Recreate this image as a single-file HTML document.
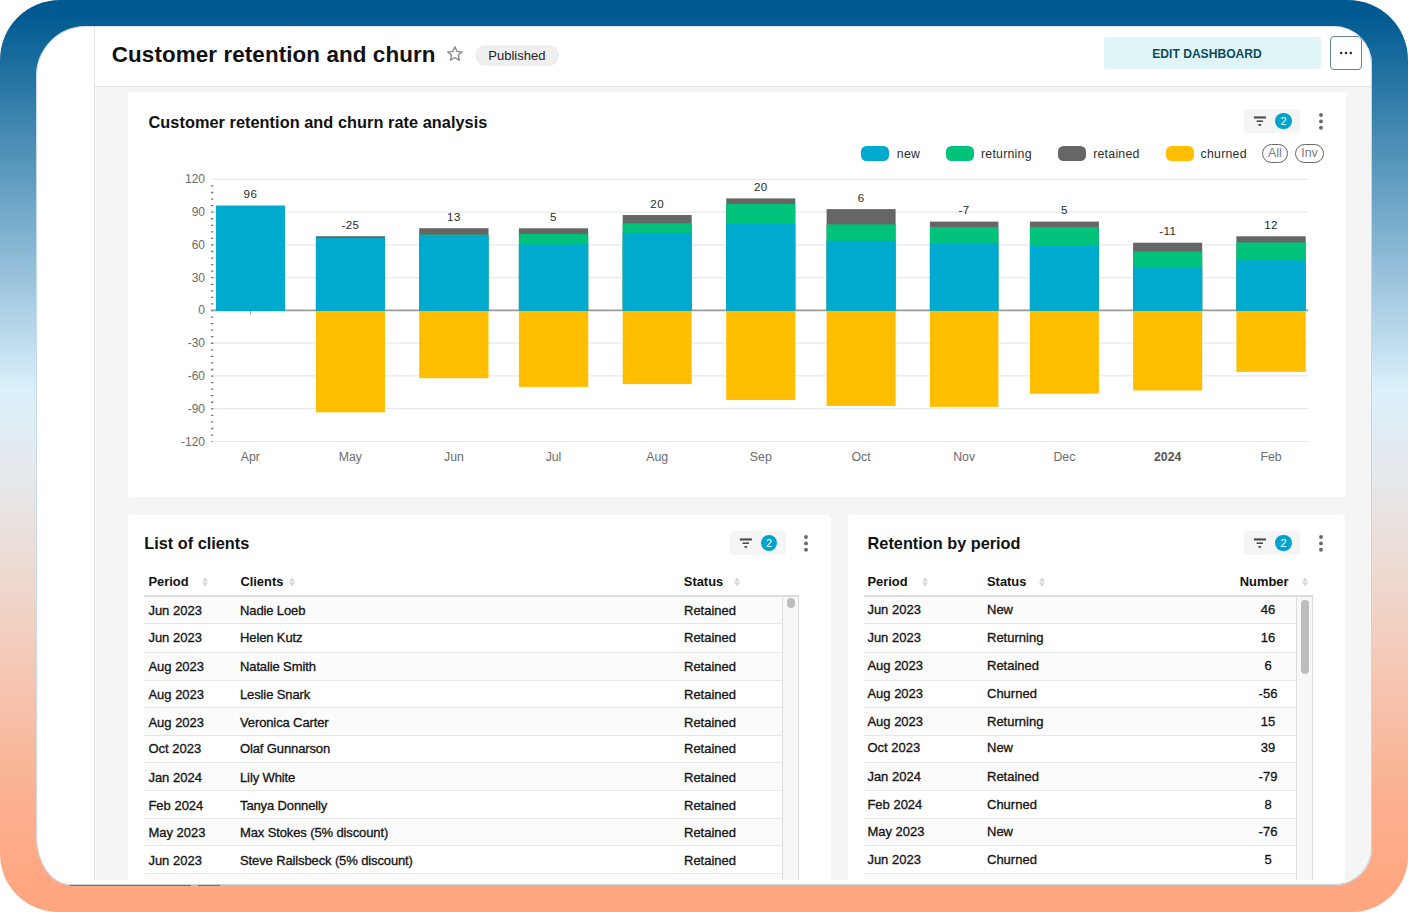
<!DOCTYPE html>
<html lang="en">
<head>
<meta charset="utf-8">
<title>Customer retention and churn</title>
<style>
*{box-sizing:border-box;margin:0;padding:0}
html,body{width:1408px;height:912px;overflow:hidden;background:#fff;font-family:"Liberation Sans",Arial,sans-serif;color:#111}
.abs{position:absolute}
.frame{position:absolute;left:0;top:0;width:1408px;height:912px;border-radius:60px 60px 56px 58px;
background:linear-gradient(180deg,#005a91 0px,#005a91 15px,#dbf0fc 390px,#e6e8ea 480px,#efd8cf 580px,#f6c2ab 700px,#fcb08f 800px,#ffa781 880px,#ffa680 912px)}
.panel{position:absolute;left:36px;top:26px;width:1336px;height:859px;background:#fff;border-radius:50px 38px 37px 34px/50px 38px 37px 49px;overflow:hidden}
.pborder{position:absolute;left:36px;top:26px;width:1336px;height:859px;border-radius:50px 38px 37px 34px/50px 38px 37px 49px;border:1px solid rgba(150,185,215,0.55);border-top-color:rgba(190,205,225,0.6);pointer-events:none}
.inner{position:absolute;left:-36px;top:-26px;width:1408px;height:912px}
.greybg{position:absolute;left:94px;top:86px;width:1280px;height:794px;background:#f5f5f5;border-left:1px solid #e4e4e4;border-top:1px solid #e6e6e6}
.vline{position:absolute;left:94px;top:26px;width:1px;height:854px;background:#e6e6e6}
.card{position:absolute;background:#fff;border-radius:4px}
h1{position:absolute;left:111.8px;top:40.5px;font-size:22.4px;line-height:28px;font-weight:700;letter-spacing:0.1px;white-space:nowrap;color:#101010}
.pub{position:absolute;left:476.2px;top:45.8px;width:81.4px;height:19.6px;border-radius:10px;background:#efefef;box-shadow:0 0 0 0.6px #e4e4e4;font-size:13px;line-height:19.8px;text-align:center;color:#222}
.editbtn{position:absolute;left:1104px;top:37px;width:216.5px;height:32px;border-radius:3px;background:#dff5f7;font-size:12.1px;font-weight:700;line-height:35.2px;text-align:center;padding-right:10.5px;color:#0d4a5a;letter-spacing:0px}
.morebtn{position:absolute;left:1330px;top:36px;width:32px;height:33.5px;border-radius:4px;border:1.2px solid #5f8790;background:#fff}
.h2{position:absolute;font-size:16.3px;font-weight:700;line-height:20px;white-space:nowrap;color:#111}
.th{position:absolute;font-size:12.9px;font-weight:700;line-height:16px;white-space:nowrap;color:#111}
.row{position:absolute;border-bottom:1px solid #e8e8e8;font-size:13px;color:#151515}
.row .c{position:absolute;line-height:16px;white-space:nowrap;-webkit-text-stroke:0.32px #151515}
.hline{position:absolute;height:2px;background:#dcdcdc}
.fbox{position:absolute;width:55.5px;height:23.5px;border-radius:4px;background:#f5f5f5}
.badge{position:absolute;width:16.4px;height:16.4px;border-radius:50%;background:#00a3cc;color:#fff;font-size:10.8px;line-height:16.6px;text-align:center}
.chartsvg{position:absolute;left:0;top:0}
.chartsvg text{font-family:"Liberation Sans",Arial,sans-serif}
.ax{font-size:12px;fill:#6b6b6b}
.xl{font-size:12.3px;fill:#6b6b6b}
.xl.b{font-weight:700;fill:#555}
.val{font-size:11.6px;fill:#2a2a2a;letter-spacing:0.4px}
.lg{position:absolute;top:145.5px;width:28.2px;height:15.4px;border-radius:5.5px}
.lt{position:absolute;top:146.5px;font-size:12.3px;line-height:15px;color:#2b2b2b;white-space:nowrap;letter-spacing:0.25px}
.pill{position:absolute;top:143.5px;height:19px;border:1.2px solid #666;border-radius:10px;font-size:12.4px;line-height:16.6px;text-align:center;color:#7c7c7c}
.track{position:absolute;background:#f8f8f8;border-left:1px solid #dcdcdc;border-right:1px solid #dcdcdc}
.thumb{position:absolute;background:#bdbdbd;border-radius:5px}
</style>
</head>
<body>
<div class="frame"></div>
<div class="panel"><div class="inner">
<div class="vline"></div>
<div class="greybg"></div>

<h1>Customer retention and churn</h1>
<svg class="abs" style="left:446.3px;top:45.2px" width="17.8" height="17.8" viewBox="0 0 18 18"><path d="M9 1.8 L11.1 6.5 L16.2 7 L12.4 10.4 L13.5 15.4 L9 12.8 L4.5 15.4 L5.6 10.4 L1.8 7 L6.9 6.5 Z" fill="none" stroke="#909090" stroke-width="1.5" stroke-linejoin="round"/></svg>
<div class="pub">Published</div>
<div class="editbtn">EDIT DASHBOARD</div>
<div class="morebtn"></div>
<svg class="abs" style="left:1338px;top:50px" width="16" height="6" viewBox="0 0 16 6"><circle cx="3.2" cy="3" r="1.25" fill="#2a2a2a"/><circle cx="8" cy="3" r="1.25" fill="#2a2a2a"/><circle cx="12.8" cy="3" r="1.25" fill="#2a2a2a"/></svg>

<!-- chart card -->
<div class="card" style="left:128px;top:92px;width:1217.5px;height:405px"></div>
<div class="h2" style="left:148.5px;top:111.5px;letter-spacing:0.055px">Customer retention and churn rate analysis</div>
<div class="fbox" style="left:1244.4px;top:109.2px"></div>
<svg class="abs" style="left:1252.9px;top:115.7px" width="14" height="11" viewBox="0 0 14 11"><rect x="0.9" y="0.4" width="12" height="2.1" fill="#4a4a4a"/><rect x="3.6" y="4.4" width="6.4" height="1.6" fill="#4a4a4a"/><rect x="5.3" y="8.0" width="3" height="1.8" rx="0.7" fill="#4a4a4a"/></svg>
<div class="badge" style="left:1275.3000000000002px;top:112.8px">2</div>
<svg class="abs" style="left:1317.7px;top:111.5px" width="6" height="20" viewBox="0 0 6 20"><circle cx="3" cy="3.0" r="1.95" fill="#6a6a6a"/><circle cx="3" cy="9.4" r="1.95" fill="#6a6a6a"/><circle cx="3" cy="15.8" r="1.95" fill="#6a6a6a"/></svg>
<div class="lg" style="left:861px;background:#00a9ce"></div><div class="lt" style="left:896.8px">new</div>
<div class="lg" style="left:945.9px;background:#00c37b"></div><div class="lt" style="left:981px">returning</div>
<div class="lg" style="left:1058.1px;background:#666666"></div><div class="lt" style="left:1093.2px">retained</div>
<div class="lg" style="left:1165.9px;background:#ffbf00"></div><div class="lt" style="left:1200.6px">churned</div>
<div class="pill" style="left:1262.3px;width:25.4px">All</div>
<div class="pill" style="left:1295px;width:29px">Inv</div>
<svg class="chartsvg" width="1408" height="912" viewBox="0 0 1408 912">
<line x1="212" x2="1308.3" y1="179.3" y2="179.3" stroke="#e3eaf2" stroke-width="1.2"/>
<text x="205" y="183.3" text-anchor="end" class="ax">120</text>
<line x1="212" x2="1308.3" y1="212.1" y2="212.1" stroke="#e3eaf2" stroke-width="1.2"/>
<text x="205" y="216.1" text-anchor="end" class="ax">90</text>
<line x1="212" x2="1308.3" y1="244.8" y2="244.8" stroke="#e3eaf2" stroke-width="1.2"/>
<text x="205" y="248.8" text-anchor="end" class="ax">60</text>
<line x1="212" x2="1308.3" y1="277.6" y2="277.6" stroke="#e3eaf2" stroke-width="1.2"/>
<text x="205" y="281.6" text-anchor="end" class="ax">30</text>
<text x="205" y="314.4" text-anchor="end" class="ax">0</text>
<line x1="212" x2="1308.3" y1="343.2" y2="343.2" stroke="#e3eaf2" stroke-width="1.2"/>
<text x="205" y="347.2" text-anchor="end" class="ax">-30</text>
<line x1="212" x2="1308.3" y1="375.9" y2="375.9" stroke="#e3eaf2" stroke-width="1.2"/>
<text x="205" y="379.9" text-anchor="end" class="ax">-60</text>
<line x1="212" x2="1308.3" y1="408.7" y2="408.7" stroke="#e3eaf2" stroke-width="1.2"/>
<text x="205" y="412.7" text-anchor="end" class="ax">-90</text>
<line x1="212" x2="1308.3" y1="441.5" y2="441.5" stroke="#e3eaf2" stroke-width="1.2"/>
<text x="205" y="445.5" text-anchor="end" class="ax">-120</text>
<line x1="212.2" x2="212.2" y1="185.3" y2="441.5" stroke="#777" stroke-width="2.4" stroke-dasharray="1.3 5.255"/>
<line x1="212" x2="1308.3" y1="310.4" y2="310.4" stroke="#9a9a9a" stroke-width="1.6"/>
<line x1="250.5" x2="250.5" y1="310.4" y2="314.4" stroke="#9a9a9a" stroke-width="1"/>
<rect x="215.9" y="205.5" width="69.1" height="105.5" fill="#00a9ce"/>
<text x="250.4" y="198.2" text-anchor="middle" class="val">96</text>
<text x="250.4" y="460.5" text-anchor="middle" class="xl">Apr</text>
<rect x="315.9" y="236.2" width="69.1" height="74.2" fill="#666666"/>
<rect x="315.9" y="238.0" width="69.1" height="73.0" fill="#00a9ce"/>
<rect x="315.9" y="310.9" width="69.1" height="101.4" fill="#ffbf00"/>
<text x="350.4" y="228.9" text-anchor="middle" class="val">-25</text>
<text x="350.4" y="460.5" text-anchor="middle" class="xl">May</text>
<rect x="419.2" y="228.2" width="69.3" height="82.2" fill="#666666"/>
<rect x="419.2" y="234.6" width="69.3" height="75.8" fill="#00c37b"/>
<rect x="419.2" y="235.6" width="69.3" height="75.4" fill="#00a9ce"/>
<rect x="419.2" y="310.9" width="69.3" height="67.3" fill="#ffbf00"/>
<text x="453.9" y="220.9" text-anchor="middle" class="val">13</text>
<text x="453.9" y="460.5" text-anchor="middle" class="xl">Jun</text>
<rect x="518.9" y="228.3" width="69.3" height="82.1" fill="#666666"/>
<rect x="518.9" y="233.9" width="69.3" height="76.5" fill="#00c37b"/>
<rect x="518.9" y="244.4" width="69.3" height="66.6" fill="#00a9ce"/>
<rect x="518.9" y="310.9" width="69.3" height="76.0" fill="#ffbf00"/>
<text x="553.5" y="221.0" text-anchor="middle" class="val">5</text>
<text x="553.5" y="460.5" text-anchor="middle" class="xl">Jul</text>
<rect x="622.7" y="215.0" width="69.0" height="95.4" fill="#666666"/>
<rect x="622.7" y="223.4" width="69.0" height="87.0" fill="#00c37b"/>
<rect x="622.7" y="232.9" width="69.0" height="78.1" fill="#00a9ce"/>
<rect x="622.7" y="310.9" width="69.0" height="73.2" fill="#ffbf00"/>
<text x="657.2" y="207.7" text-anchor="middle" class="val">20</text>
<text x="657.2" y="460.5" text-anchor="middle" class="xl">Aug</text>
<rect x="726.2" y="198.4" width="69.1" height="112.0" fill="#666666"/>
<rect x="726.2" y="204.0" width="69.1" height="106.4" fill="#00c37b"/>
<rect x="726.2" y="223.9" width="69.1" height="87.1" fill="#00a9ce"/>
<rect x="726.2" y="310.9" width="69.1" height="89.1" fill="#ffbf00"/>
<text x="760.8" y="191.1" text-anchor="middle" class="val">20</text>
<text x="760.8" y="460.5" text-anchor="middle" class="xl">Sep</text>
<rect x="826.6" y="209.1" width="69.0" height="101.3" fill="#666666"/>
<rect x="826.6" y="224.4" width="69.0" height="86.0" fill="#00c37b"/>
<rect x="826.6" y="240.8" width="69.0" height="70.2" fill="#00a9ce"/>
<rect x="826.6" y="310.9" width="69.0" height="95.1" fill="#ffbf00"/>
<text x="861.1" y="201.8" text-anchor="middle" class="val">6</text>
<text x="861.1" y="460.5" text-anchor="middle" class="xl">Oct</text>
<rect x="929.9" y="221.6" width="68.5" height="88.8" fill="#666666"/>
<rect x="929.9" y="227.0" width="68.5" height="83.4" fill="#00c37b"/>
<rect x="929.9" y="243.1" width="68.5" height="67.9" fill="#00a9ce"/>
<rect x="929.9" y="310.9" width="68.5" height="96.0" fill="#ffbf00"/>
<text x="964.1" y="214.3" text-anchor="middle" class="val">-7</text>
<text x="964.1" y="460.5" text-anchor="middle" class="xl">Nov</text>
<rect x="1029.9" y="221.6" width="69.0" height="88.8" fill="#666666"/>
<rect x="1029.9" y="227.0" width="69.0" height="83.4" fill="#00c37b"/>
<rect x="1029.9" y="245.7" width="69.0" height="65.3" fill="#00a9ce"/>
<rect x="1029.9" y="310.9" width="69.0" height="82.8" fill="#ffbf00"/>
<text x="1064.4" y="214.3" text-anchor="middle" class="val">5</text>
<text x="1064.4" y="460.5" text-anchor="middle" class="xl">Dec</text>
<rect x="1133.1" y="242.7" width="69.1" height="67.7" fill="#666666"/>
<rect x="1133.1" y="251.4" width="69.1" height="59.0" fill="#00c37b"/>
<rect x="1133.1" y="267.7" width="69.1" height="43.3" fill="#00a9ce"/>
<rect x="1133.1" y="310.9" width="69.1" height="79.6" fill="#ffbf00"/>
<text x="1167.7" y="235.4" text-anchor="middle" class="val">-11</text>
<text x="1167.7" y="460.5" text-anchor="middle" class="xl b">2024</text>
<rect x="1236.4" y="236.3" width="69.3" height="74.1" fill="#666666"/>
<rect x="1236.4" y="242.4" width="69.3" height="68.0" fill="#00c37b"/>
<rect x="1236.4" y="260.3" width="69.3" height="50.7" fill="#00a9ce"/>
<rect x="1236.4" y="310.9" width="69.3" height="61.0" fill="#ffbf00"/>
<text x="1271.1" y="229.0" text-anchor="middle" class="val">12</text>
<text x="1271.1" y="460.5" text-anchor="middle" class="xl">Feb</text>
</svg>

<!-- list of clients card -->
<div class="card" style="left:127.7px;top:514.7px;width:703px;height:400px"></div>
<div class="h2" style="left:144.3px;top:533px">List of clients</div>
<div class="fbox" style="left:730px;top:531.3px"></div>
<svg class="abs" style="left:738.5px;top:537.8px" width="14" height="11" viewBox="0 0 14 11"><rect x="0.9" y="0.4" width="12" height="2.1" fill="#4a4a4a"/><rect x="3.6" y="4.4" width="6.4" height="1.6" fill="#4a4a4a"/><rect x="5.3" y="8.0" width="3" height="1.8" rx="0.7" fill="#4a4a4a"/></svg>
<div class="badge" style="left:760.9px;top:534.9px">2</div>
<svg class="abs" style="left:803.3px;top:533.5999999999999px" width="6" height="20" viewBox="0 0 6 20"><circle cx="3" cy="3.0" r="1.95" fill="#6a6a6a"/><circle cx="3" cy="9.4" r="1.95" fill="#6a6a6a"/><circle cx="3" cy="15.8" r="1.95" fill="#6a6a6a"/></svg>
<div class="th" style="left:148.4px;top:574px">Period</div><svg class="abs" style="left:201px;top:577px" width="8" height="10" viewBox="0 0 8 10"><path d="M4 0.5 L7 4.4 H1 Z" fill="#d6d6d6"/><path d="M4 9.5 L7 5.6 H1 Z" fill="#d6d6d6"/></svg>
<div class="th" style="left:240.4px;top:574px">Clients</div><svg class="abs" style="left:287.8px;top:577px" width="8" height="10" viewBox="0 0 8 10"><path d="M4 0.5 L7 4.4 H1 Z" fill="#d6d6d6"/><path d="M4 9.5 L7 5.6 H1 Z" fill="#d6d6d6"/></svg>
<div class="th" style="left:683.8px;top:574px">Status</div><svg class="abs" style="left:733px;top:577px" width="8" height="10" viewBox="0 0 8 10"><path d="M4 0.5 L7 4.4 H1 Z" fill="#d6d6d6"/><path d="M4 9.5 L7 5.6 H1 Z" fill="#d6d6d6"/></svg>
<div class="row" style="left:144px;top:596.4px;width:638px;height:27.6px;background:#fbfbfb">
<span class="c" style="left:4.4px;top:6.5px">Jun 2023</span>
<span class="c" style="left:96.0px;top:6.5px;letter-spacing:-0.12px">Nadie Loeb</span>
<span class="c" style="left:540.0px;top:6.5px">Retained</span>
</div>
<div class="row" style="left:144px;top:624.0px;width:638px;height:28.6px;background:#ffffff">
<span class="c" style="left:4.4px;top:6.0px">Jun 2023</span>
<span class="c" style="left:96.0px;top:6.0px;letter-spacing:-0.12px">Helen Kutz</span>
<span class="c" style="left:540.0px;top:6.0px">Retained</span>
</div>
<div class="row" style="left:144px;top:652.6px;width:638px;height:28.2px;background:#fbfbfb">
<span class="c" style="left:4.4px;top:6.3px">Aug 2023</span>
<span class="c" style="left:96.0px;top:6.3px;letter-spacing:-0.12px">Natalie Smith</span>
<span class="c" style="left:540.0px;top:6.3px">Retained</span>
</div>
<div class="row" style="left:144px;top:680.8px;width:638px;height:26.9px;background:#ffffff">
<span class="c" style="left:4.4px;top:6.1px">Aug 2023</span>
<span class="c" style="left:96.0px;top:6.1px;letter-spacing:-0.12px">Leslie Snark</span>
<span class="c" style="left:540.0px;top:6.1px">Retained</span>
</div>
<div class="row" style="left:144px;top:707.7px;width:638px;height:28.1px;background:#fbfbfb">
<span class="c" style="left:4.4px;top:7.0px">Aug 2023</span>
<span class="c" style="left:96.0px;top:7.0px;letter-spacing:-0.12px">Veronica Carter</span>
<span class="c" style="left:540.0px;top:7.0px">Retained</span>
</div>
<div class="row" style="left:144px;top:735.8px;width:638px;height:27.4px;background:#ffffff">
<span class="c" style="left:4.4px;top:5.0px">Oct 2023</span>
<span class="c" style="left:96.0px;top:5.0px;letter-spacing:-0.12px">Olaf Gunnarson</span>
<span class="c" style="left:540.0px;top:5.0px">Retained</span>
</div>
<div class="row" style="left:144px;top:763.2px;width:638px;height:28.1px;background:#fbfbfb">
<span class="c" style="left:4.4px;top:6.5px">Jan 2024</span>
<span class="c" style="left:96.0px;top:6.5px;letter-spacing:-0.12px">Lily White</span>
<span class="c" style="left:540.0px;top:6.5px">Retained</span>
</div>
<div class="row" style="left:144px;top:791.3px;width:638px;height:27.9px;background:#ffffff">
<span class="c" style="left:4.4px;top:6.3px">Feb 2024</span>
<span class="c" style="left:96.0px;top:6.3px;letter-spacing:-0.12px">Tanya Donnelly</span>
<span class="c" style="left:540.0px;top:6.3px">Retained</span>
</div>
<div class="row" style="left:144px;top:819.2px;width:638px;height:27.1px;background:#fbfbfb">
<span class="c" style="left:4.4px;top:5.7px">May 2023</span>
<span class="c" style="left:96.0px;top:5.7px;letter-spacing:-0.12px">Max Stokes (5% discount)</span>
<span class="c" style="left:540.0px;top:5.7px">Retained</span>
</div>
<div class="row" style="left:144px;top:846.3px;width:638px;height:27.6px;background:#ffffff">
<span class="c" style="left:4.4px;top:6.5px">Jun 2023</span>
<span class="c" style="left:96.0px;top:6.5px;letter-spacing:-0.12px">Steve Railsbeck (5% discount)</span>
<span class="c" style="left:540.0px;top:6.5px">Retained</span>
</div>
<div class="row" style="left:144px;top:873.9px;width:638px;height:27.7px;background:#fbfbfb">
<span class="c" style="left:4.4px;top:6.4px"></span>
<span class="c" style="left:96.0px;top:6.4px;letter-spacing:-0.12px"></span>
<span class="c" style="left:540.0px;top:6.4px"></span>
</div>
<div class="hline" style="left:144px;top:594.8px;width:654.6px"></div>
<div class="track" style="left:782px;top:596.8px;width:16.8px;height:300px"></div>
<div class="thumb" style="left:787.2px;top:597.6px;width:8px;height:10.6px"></div>

<!-- retention by period card -->
<div class="card" style="left:848.2px;top:514.7px;width:497.2px;height:400px"></div>
<div class="h2" style="left:867.6px;top:533px">Retention by period</div>
<div class="fbox" style="left:1244.4px;top:531.3px"></div>
<svg class="abs" style="left:1252.9px;top:537.8px" width="14" height="11" viewBox="0 0 14 11"><rect x="0.9" y="0.4" width="12" height="2.1" fill="#4a4a4a"/><rect x="3.6" y="4.4" width="6.4" height="1.6" fill="#4a4a4a"/><rect x="5.3" y="8.0" width="3" height="1.8" rx="0.7" fill="#4a4a4a"/></svg>
<div class="badge" style="left:1275.3000000000002px;top:534.9px">2</div>
<svg class="abs" style="left:1317.7px;top:533.5999999999999px" width="6" height="20" viewBox="0 0 6 20"><circle cx="3" cy="3.0" r="1.95" fill="#6a6a6a"/><circle cx="3" cy="9.4" r="1.95" fill="#6a6a6a"/><circle cx="3" cy="15.8" r="1.95" fill="#6a6a6a"/></svg>
<div class="th" style="left:867.4px;top:574px">Period</div><svg class="abs" style="left:921px;top:577px" width="8" height="10" viewBox="0 0 8 10"><path d="M4 0.5 L7 4.4 H1 Z" fill="#d6d6d6"/><path d="M4 9.5 L7 5.6 H1 Z" fill="#d6d6d6"/></svg>
<div class="th" style="left:987px;top:574px">Status</div><svg class="abs" style="left:1038px;top:577px" width="8" height="10" viewBox="0 0 8 10"><path d="M4 0.5 L7 4.4 H1 Z" fill="#d6d6d6"/><path d="M4 9.5 L7 5.6 H1 Z" fill="#d6d6d6"/></svg>
<div class="th" style="left:1239.8px;top:574px">Number</div><svg class="abs" style="left:1301.2px;top:577px" width="8" height="10" viewBox="0 0 8 10"><path d="M4 0.5 L7 4.4 H1 Z" fill="#d6d6d6"/><path d="M4 9.5 L7 5.6 H1 Z" fill="#d6d6d6"/></svg>
<div class="row" style="left:864px;top:596.4px;width:432px;height:27.6px;background:#fbfbfb">
<span class="c" style="left:3.4px;top:6.0px">Jun 2023</span>
<span class="c" style="left:123.0px;top:6.0px">New</span>
<span class="c" style="left:374.0px;width:60px;text-align:center;top:6.0px">46</span>
</div>
<div class="row" style="left:864px;top:624.0px;width:432px;height:28.6px;background:#ffffff">
<span class="c" style="left:3.4px;top:5.5px">Jun 2023</span>
<span class="c" style="left:123.0px;top:5.5px">Returning</span>
<span class="c" style="left:374.0px;width:60px;text-align:center;top:5.5px">16</span>
</div>
<div class="row" style="left:864px;top:652.6px;width:432px;height:28.2px;background:#fbfbfb">
<span class="c" style="left:3.4px;top:5.8px">Aug 2023</span>
<span class="c" style="left:123.0px;top:5.8px">Retained</span>
<span class="c" style="left:374.0px;width:60px;text-align:center;top:5.8px">6</span>
</div>
<div class="row" style="left:864px;top:680.8px;width:432px;height:26.9px;background:#ffffff">
<span class="c" style="left:3.4px;top:5.6px">Aug 2023</span>
<span class="c" style="left:123.0px;top:5.6px">Churned</span>
<span class="c" style="left:374.0px;width:60px;text-align:center;top:5.6px">-56</span>
</div>
<div class="row" style="left:864px;top:707.7px;width:432px;height:28.1px;background:#fbfbfb">
<span class="c" style="left:3.4px;top:6.5px">Aug 2023</span>
<span class="c" style="left:123.0px;top:6.5px">Returning</span>
<span class="c" style="left:374.0px;width:60px;text-align:center;top:6.5px">15</span>
</div>
<div class="row" style="left:864px;top:735.8px;width:432px;height:27.4px;background:#ffffff">
<span class="c" style="left:3.4px;top:4.5px">Oct 2023</span>
<span class="c" style="left:123.0px;top:4.5px">New</span>
<span class="c" style="left:374.0px;width:60px;text-align:center;top:4.5px">39</span>
</div>
<div class="row" style="left:864px;top:763.2px;width:432px;height:28.1px;background:#fbfbfb">
<span class="c" style="left:3.4px;top:6.0px">Jan 2024</span>
<span class="c" style="left:123.0px;top:6.0px">Retained</span>
<span class="c" style="left:374.0px;width:60px;text-align:center;top:6.0px">-79</span>
</div>
<div class="row" style="left:864px;top:791.3px;width:432px;height:27.9px;background:#ffffff">
<span class="c" style="left:3.4px;top:5.8px">Feb 2024</span>
<span class="c" style="left:123.0px;top:5.8px">Churned</span>
<span class="c" style="left:374.0px;width:60px;text-align:center;top:5.8px">8</span>
</div>
<div class="row" style="left:864px;top:819.2px;width:432px;height:27.1px;background:#fbfbfb">
<span class="c" style="left:3.4px;top:5.2px">May 2023</span>
<span class="c" style="left:123.0px;top:5.2px">New</span>
<span class="c" style="left:374.0px;width:60px;text-align:center;top:5.2px">-76</span>
</div>
<div class="row" style="left:864px;top:846.3px;width:432px;height:27.6px;background:#ffffff">
<span class="c" style="left:3.4px;top:6.0px">Jun 2023</span>
<span class="c" style="left:123.0px;top:6.0px">Churned</span>
<span class="c" style="left:374.0px;width:60px;text-align:center;top:6.0px">5</span>
</div>
<div class="row" style="left:864px;top:873.9px;width:432px;height:27.7px;background:#fbfbfb">
<span class="c" style="left:3.4px;top:5.9px"></span>
<span class="c" style="left:123.0px;top:5.9px"></span>
<span class="c" style="left:374.0px;width:60px;text-align:center;top:5.9px"></span>
</div>
<div class="hline" style="left:864px;top:594.8px;width:449px"></div>
<div class="track" style="left:1296px;top:596.8px;width:17px;height:300px"></div>
<div class="thumb" style="left:1301px;top:600px;width:8px;height:74.3px"></div>

<div class="abs" style="left:94px;top:879.7px;width:1251.6px;height:10px;background:#fff"></div>
</div></div>
<div class="pborder"></div>
<div class="abs" style="left:70px;top:884.5px;width:121px;height:1px;background:#6a6f76"></div><div class="abs" style="left:198px;top:884.5px;width:21.5px;height:1px;background:#6a6f76"></div>
</body>
</html>
